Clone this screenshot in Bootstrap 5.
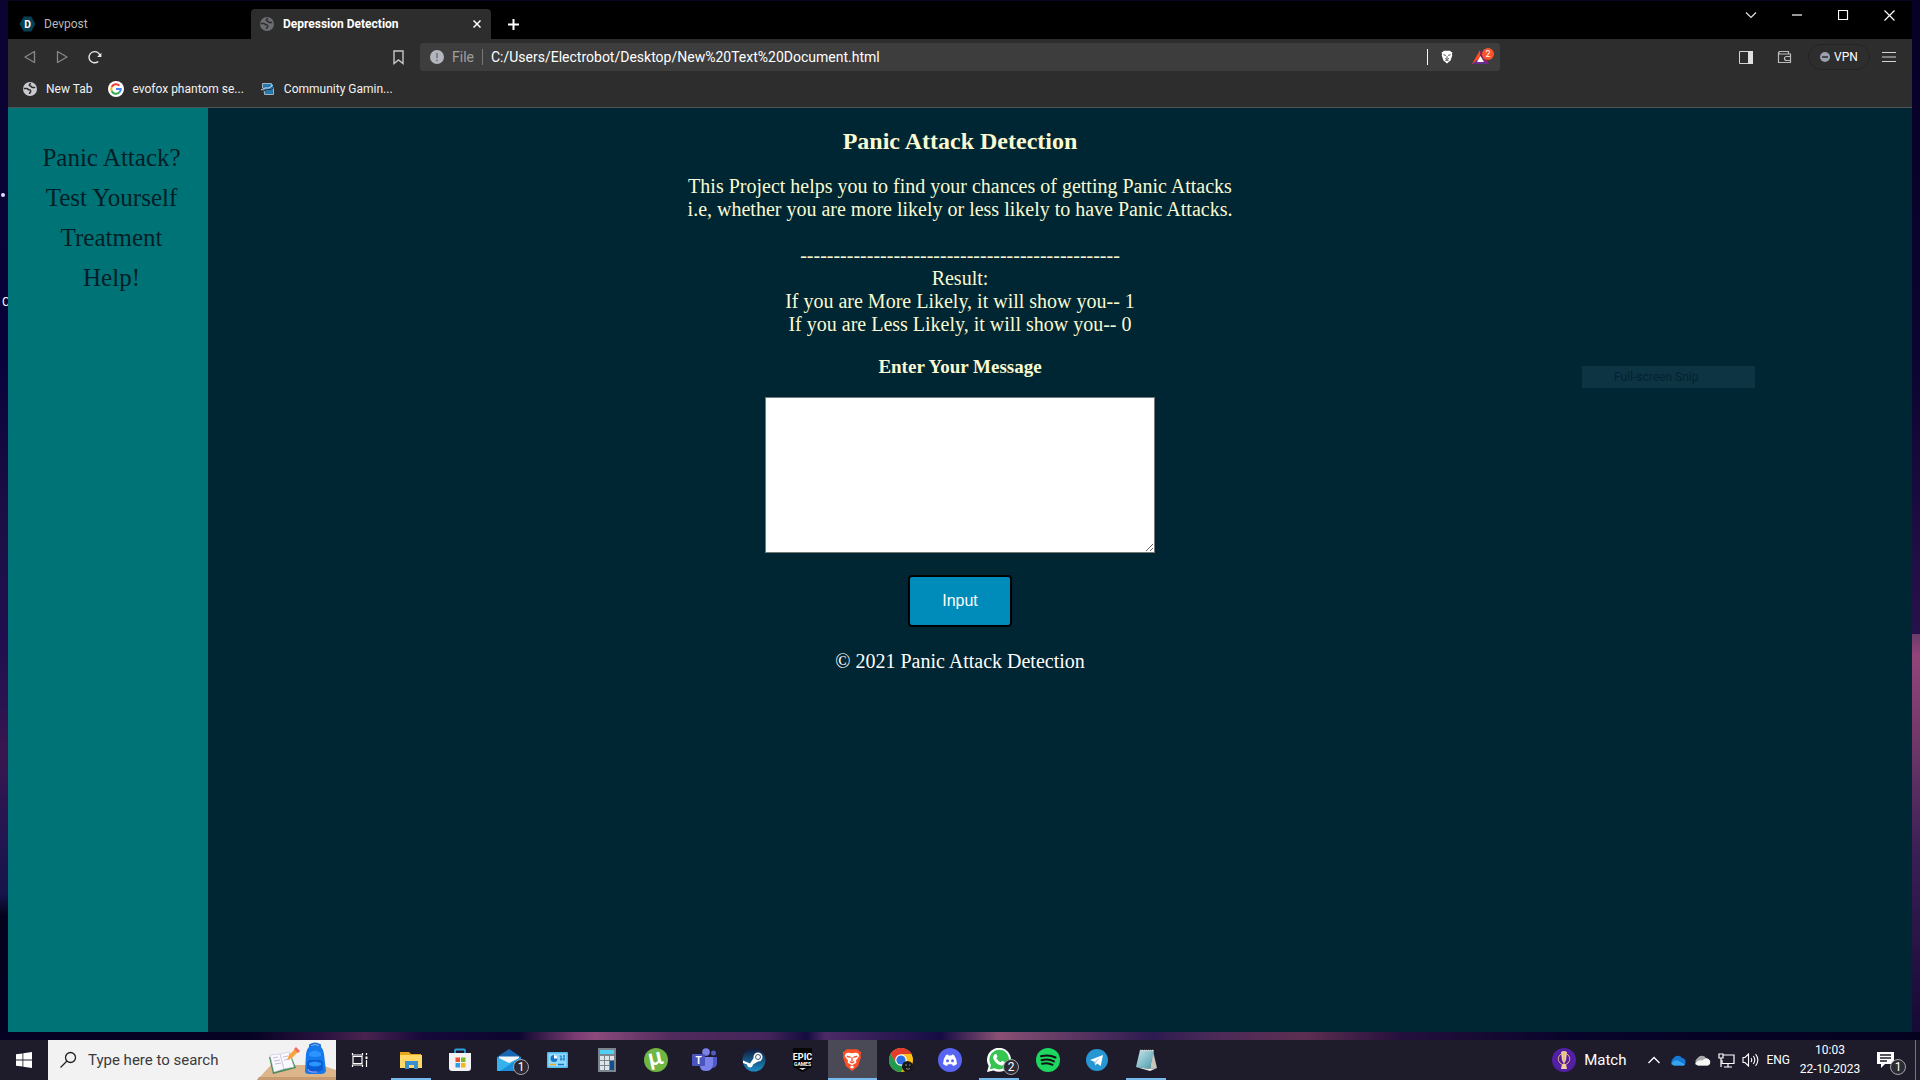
<!DOCTYPE html>
<html lang="en">
<head>
<meta charset="utf-8">
<meta name="viewport" content="width=device-width, initial-scale=1">
<title>Depression Detection</title>
<link href="https://cdn.jsdelivr.net/npm/bootstrap@5.3.0/dist/css/bootstrap.min.css" rel="stylesheet">
<style>
  body { font-family: Roboto, "Open Sans", sans-serif; font-size: 12px; line-height: 16px; color: #fff; background: #0a0322; }
  button { color: inherit; }
  svg { display: block; flex: none; }
  .plain { background: none; border: 0; padding: 0; color: inherit; display: flex; align-items: center; justify-content: center; }

  /* desktop behind the browser window */
  .desktop { padding: 1px 8px 8px; position: relative;
    background:
      linear-gradient(90deg, #060223 0 13%, #2c1340 17%, #4a2350 19%, #15083a 22%, #0d062f 27%, #7a3c72 30%, #8c4a7c 31%, #512a5c 35%, #43245a 40%, #130b3e 42%, #4c2a66 43%, #150c44 49%, #8a5074 52%, #2c1a50 60%, #4a2958 63%, #5d2e51 68%, #240f3c 73%, #1a0b35 76%, #08032a 82%, #04021f) bottom/100% 8px no-repeat,
      linear-gradient(#0b0330, #08023a 34%, #1c0f45 50%, #200f4e 61%, #2a1450 68%, #3a1650 72%, #241650 80%, #16154a 86%, #04021d 88%, #050220) left/8px 100% no-repeat,
      linear-gradient(#070027, #0a0430 34%, #251048 58%, #26124c 61%, #6d3a6c 61%, #93447a 63%, #6d3668 72%, #3a1f55 82%, #140834 100%) right/8px 100% no-repeat; }
  .star { position: absolute; left: 1px; top: 193px; width: 4px; height: 4px; border-radius: 50%; background: #e6dcff; }
  .desk-label { position: absolute; left: 2px; top: 294px; width: 6px; overflow: hidden; }

  /* browser chrome */
  .chrome { background: #2d2d2d; border-bottom: 1px solid #4d5558; }
  .tab-strip { background: #000; height: 38px; }
  .tab-item { height: 30px; width: 240px; padding: 0 6px 0 9px; color: #b8b8b8; gap: 9px; }
  .tab-item.first-tab { width: 239px; padding-left: 11px; gap: 8px; }
  .tab-item.current { background: #2d2d2d; color: #fff; font-weight: 700; border-radius: 4px 4px 0 0; }
  .win-btn { width: 46px; height: 28px; }
  .tool-row { height: 36px; }
  .tool-side { width: 412px; }
  .omnibox { background: #3d3d3d; height: 28px; border-radius: 3px; padding: 0 4px 0 10px; font-size: 14px; }
  .omnibox input { background: none; border: 0; outline: 0; color: #fff; padding: 0; min-width: 0; }
  .vsep { width: 1px; height: 16px; background: #777; }
  .vpn { width: 62px; height: 26px; border: 1px solid #242424; border-radius: 13px; gap: 4px; }
  .marks { height: 32px; padding: 2px 14px; gap: 16px; }
  .marks a { color: #f2f2f2; text-decoration: none; gap: 8px; }

  /* the page itself */
  .site { background: #002633; font-family: "Liberation Serif", serif; font-size: 20px; line-height: 23px; color: #fafad2; }
  .side-menu { width: 200px; background: #007377; padding: 30px 8px 0 15px; }
  .side-menu a { color: #021e26; text-decoration: none; font-size: 25px; line-height: 40px; text-align: center; }
  .site-main { padding: 20px 200px 20px 0; }
  .site h1 { font-size: 24px; line-height: 27px; font-weight: 700; margin: 0 0 20px; }
  .site p { margin: 0 0 20px; }
  .msg-label { font-size: 19px; line-height: 21px; font-weight: 700; margin-bottom: 20px; }
  .msg-box { width: 390px; height: 156px; border: 1px solid #767676; background: #fff; border-radius: 0; display: block; margin-bottom: 22px; padding: 2px; }
  .send { width: 104px; height: 52px; padding: 0 0 2px; background: #008cba; border: 2px solid #000; border-radius: 4px; color: #fff; font-family: "Liberation Sans", sans-serif; font-size: 16px; margin-bottom: 23px; }
  .snip { position: absolute; left: 1582px; top: 366px; width: 173px; height: 22px; padding: 3px 0 0 32px; background: #0c3442; color: #04222f; }

  /* taskbar */
  .taskbar { height: 40px; background: #1e1c2b; }
  .start { width: 48px; height: 40px; }
  .find { width: 288px; height: 40px; background: #f2f2f2; padding-left: 11px; gap: 8px; }
  .find input { background: none; border: 0; outline: 0; padding: 0; margin-left: 3px; font-size: 15px; color: #333; min-width: 0; }
  .find input::placeholder { color: #3a3a3a; opacity: 1; }
  .app { width: 49px; height: 40px; position: relative; padding-right: 2px; }
  .app.wide { width: 51px; padding-right: 4px; }
  .app.running::after { content: ""; position: absolute; left: 4px; right: 5px; bottom: 0; height: 2px; background: #76b9ed; }
  .app.focus { background: #4a4956; }
  .app.focus::after { left: 0; right: 0; }
  .count { position: absolute; left: 28px; top: 19px; width: 16px; height: 16px; border-radius: 50%; border: 1px solid #a5a5a8; background: #2c2b35; font-size: 12px; line-height: 14px; text-align: center; }
  .tray-ico { width: 24px; height: 40px; }
  .news { font-size: 15px; margin-right: 12px; }
  .clock { width: 72px; padding-left: 8px; text-align: center; line-height: 19px; white-space: nowrap; }
</style>
<script src="https://cdn.jsdelivr.net/npm/bootstrap@5.3.0/dist/js/bootstrap.bundle.min.js"></script>
</head>
<body class="d-flex flex-column min-vh-100">

<svg width="0" height="0" class="position-absolute" aria-hidden="true">
  <symbol id="globe" viewBox="0 0 14 14"><circle cx="7" cy="7" r="7" fill="currentColor"/><path d="M.8 6.500h3c1 0 1.200 1.300 2.300 1.300 1.300 0 1.900.8 1.500 2-.3.900-1.100.9-1.100 2.200" fill="none" stroke="#2d2d2d" stroke-width="1.500"/><path d="M8 1.500c-2 .6-2.300 2.300-.6 2.500 1.200.1.900 1.500 2.200 1.500h2.600" fill="none" stroke="#2d2d2d" stroke-width="1.500"/></symbol>
  <symbol id="lion" viewBox="0 0 16 18"><path d="M4 1h8l1.500 1.500L15 3l-.6 2.200.4 1.600-2.200 6.700L8 17.500l-4.600-4L1.200 6.800l.4-1.600L1 3l1.500-.5z"/></symbol>
</svg>

<div class="desktop flex-grow-1 d-flex flex-column">
  <span class="star"></span><span class="desk-label">C</span>

  <header class="chrome">
    <div class="tab-strip d-flex align-items-end">
      <div class="tab-item first-tab d-flex align-items-center me-1">
        <svg width="17" height="16" viewBox="0 0 18 16"><path d="M5 0h8l4.500 8L13 16H5L.5 8z" fill="#073f53"/><text x="9" y="12" text-anchor="middle" font-size="11" font-weight="700" fill="#fff">D</text></svg>
        <span>Devpost</span>
      </div>
      <div class="tab-item current d-flex align-items-center">
        <svg width="14" height="14" color="#6b6d72"><use href="#globe"/></svg>
        <span class="flex-grow-1">Depression Detection</span>
        <button class="plain p-1" aria-label="Close tab"><svg width="8" height="8" viewBox="0 0 8 8"><path d="M.5.5l7 7M7.500.5l-7 7" stroke="#fff" stroke-width="1.500"/></svg></button>
      </div>
      <button class="plain ms-3 mb-2" aria-label="New tab"><svg width="13" height="13" viewBox="0 0 13 13"><path d="M6.500 1v11M1 6.500h11" stroke="#fff" stroke-width="2"/></svg></button>
      <div class="d-flex ms-auto align-self-start">
        <button class="plain win-btn" aria-label="Search tabs"><svg width="12" height="8" viewBox="0 0 12 8"><path d="M1 1.500l5 5 5-5" fill="none" stroke="#e4e4e4" stroke-width="1.200"/></svg></button>
        <button class="plain win-btn" aria-label="Minimize"><svg width="10" height="2"><path d="M0 1h10" stroke="#fff" stroke-width="1.200"/></svg></button>
        <button class="plain win-btn" aria-label="Maximize"><svg width="11" height="11"><path d="M.5.5h9v9h-9z" fill="none" stroke="#fff" stroke-width="1.200"/></svg></button>
        <button class="plain win-btn" aria-label="Close"><svg width="11" height="11"><path d="M.5.5l10 10M10.500.5l-10 10" stroke="#fff" stroke-width="1.200"/></svg></button>
      </div>
    </div>

    <div class="tool-row d-flex align-items-center">
      <div class="tool-side d-flex align-items-center">
        <button class="plain ms-3" aria-label="Back"><svg width="12" height="14" viewBox="0 0 12 14"><path d="M10.500 1.500v11L1 7z" fill="none" stroke="#86888a" stroke-width="1.300" stroke-linejoin="round"/></svg></button>
        <button class="plain ms-3 ps-1" aria-label="Forward"><svg width="12" height="14" viewBox="0 0 12 14"><path d="M1.500 1.500v11L11 7z" fill="none" stroke="#86888a" stroke-width="1.300" stroke-linejoin="round"/></svg></button>
        <button class="plain ms-3 ps-1" aria-label="Reload"><svg width="14" height="14" viewBox="0 0 15 15"><path d="M11 12.300A6 6 0 1 1 12.700 5.500" fill="none" stroke="#e8e8e8" stroke-width="1.500"/><path d="M14.300 3v4.600H9.800z" fill="#e8e8e8"/></svg></button>
        <button class="plain ms-auto me-3" aria-label="Bookmark this page"><svg width="11" height="15" viewBox="0 0 11 15"><path d="M1 1h9v12.500L5.500 10 1 13.500z" fill="none" stroke="#c4c6c8" stroke-width="1.400"/></svg></button>
      </div>
      <div class="omnibox flex-grow-1 d-flex align-items-center">
        <svg width="14" height="14"><circle cx="7" cy="7" r="7" fill="#b4b6bd"/><path d="M7 3v5M7 9.500v1.800" stroke="#77797f" stroke-width="1.700"/></svg>
        <label for="url" class="ms-2 me-2 text-white-50">File</label><span class="vsep me-2"></span>
        <input id="url" class="flex-grow-1" type="text" value="C:/Users/Electrobot/Desktop/New%20Text%20Document.html">
        <span class="vsep bg-light me-2"></span>
        <button class="plain ms-1" aria-label="Shields"><svg width="14" height="14" viewBox="0 0 16 18"><g fill="#fff"><use href="#lion" width="16" height="18"/></g><path d="M3.500 6l3 1M12.500 6l-3 1M5.500 11l2.500 1 2.500-1M8 8v3M6 14l2-1 2 1" fill="none" stroke="#444" stroke-width="1.200"/></svg></button>
        <button class="plain ms-3" aria-label="Rewards, 2 new"><svg width="26" height="20" viewBox="0 0 26 20"><path d="M10 3L2 17h8z" fill="#ff4a24"/><path d="M2 17h17l-4-4H7z" fill="#662d91"/><path d="M10 3l9 14-5-3-4-7z" fill="#9e1f63"/><path d="M10.500 9l3.500 6H7z" fill="#fff"/><circle cx="18" cy="7" r="6" fill="#fb542b"/><text x="18" y="10" font-size="9" text-anchor="middle" fill="#fff">2</text></svg></button>
      </div>
      <div class="tool-side d-flex align-items-center justify-content-end">
        <button class="plain" aria-label="Side panel"><svg width="14" height="13"><path d="M.5.5h13v12H.5z" fill="none" stroke="#d4d4d4"/><path d="M9 0h5v13H9z" fill="#e0e0e0"/></svg></button>
        <button class="plain ms-4" aria-label="Wallet"><svg width="15" height="14" viewBox="0 0 15 14"><path d="M11.500 3.500v-2h-9a1.500 1.500 0 0 0 0 2.500h11v8.500h-12V2M14 6.500H9.500a1.500 1.500 0 0 0 0 4H14" fill="none" stroke="#b9bbbd" stroke-width="1.200"/></svg></button>
        <button class="plain vpn ms-3 me-2"><svg width="10" height="10"><circle cx="5" cy="5" r="5" fill="#9a9fae"/><path d="M2 5h6" stroke="#2d2d2d" stroke-width="1.500"/></svg><span>VPN</span></button>
        <button class="plain ms-1 me-3" aria-label="Menu"><svg width="14" height="12"><path d="M0 1.500h14M0 6h14M0 10.500h14" stroke="#d4d4d4" stroke-width="1.200"/></svg></button>
      </div>
    </div>

    <nav class="marks d-flex align-items-start" aria-label="Bookmarks">
      <a href="#" class="d-flex align-items-center pt-1"><svg width="16" height="16" color="#c9cbcf" viewBox="0 0 16 16"><use href="#globe" x="1" y="1" width="14" height="14"/></svg>New Tab</a>
      <a href="#" class="d-flex align-items-center pt-1"><svg width="16" height="16" viewBox="0 0 16 16"><circle cx="8" cy="8" r="8" fill="#fff"/><g fill="none" stroke-width="2"><path d="M11.500 4.600A4.800 4.800 0 0 0 3.700 6" stroke="#ea4335"/><path d="M3.700 6a4.800 4.800 0 0 0 0 4" stroke="#fbbc05"/><path d="M3.700 10a4.800 4.800 0 0 0 7.500 1.600" stroke="#34a853"/><path d="M11.200 11.600A4.800 4.800 0 0 0 12.800 8H8" stroke="#4285f4"/></g></svg>evofox phantom se...</a>
      <a href="#" class="d-flex align-items-center pt-1"><svg width="16" height="16" viewBox="0 0 16 16"><path d="M3 3h9l1 1v8l-2 2H5l-2-3z" fill="#2878ad"/><path d="M2.500 7V2.500h9V5M4.500 10v3.500h9V6" fill="none" stroke="#9fb4c2"/><path d="M1 9l4-2h4l4-3" fill="none" stroke="#d5dde2"/><path d="M3 10.500l4-2 4 0 3-2" fill="none" stroke="#263844"/></svg>Community Gamin...</a>
    </nav>
  </header>

  <div class="site flex-grow-1 d-flex">
    <nav class="side-menu d-flex flex-column flex-shrink-0">
      <a href="#">Panic Attack?</a>
      <a href="#">Test Yourself</a>
      <a href="#">Treatment</a>
      <a href="#">Help!</a>
    </nav>
    <main class="site-main flex-grow-1 text-center">
      <h1>Panic Attack Detection</h1>
      <p>This Project helps you to find your chances of getting Panic Attacks<br>i.e, whether you are more likely or less likely to have Panic Attacks.<br><br>------------------------------------------------<br>Result:<br>If you are More Likely, it will show you-- 1<br>If you are Less Likely, it will show you-- 0</p>
      <form class="d-flex flex-column align-items-center">
        <label for="msg" class="msg-label">Enter Your Message</label>
        <textarea id="msg" class="msg-box"></textarea>
        <button type="button" class="send">Input</button>
      </form>
      <footer class="text-white">© 2021 Panic Attack Detection</footer>
    </main>
  </div>
  <div class="snip">Full-screen Snip</div>
</div>

<footer class="taskbar d-flex align-items-center">
  <button class="plain start" aria-label="Start"><svg width="16" height="16" viewBox="0 0 16 16" fill="#fff"><path d="M0 2.300L6.500 1.400v6.200H0zM7.300 1.200L16 0v7.600H7.300zM0 8.400h6.500v6.200L0 13.700zM7.300 8.400H16V16l-8.700-1.200z"/></svg></button>
  <div class="find d-flex align-items-center">
    <label for="find" aria-label="Search"><svg width="18" height="18" viewBox="0 0 18 18"><circle cx="11.500" cy="6.500" r="5" fill="none" stroke="#222" stroke-width="1.300"/><path d="M8 10l-6.500 6.500" stroke="#222" stroke-width="1.300"/></svg></label>
    <input id="find" type="text" class="flex-grow-1" placeholder="Type here to search">
    <svg width="79" height="40" viewBox="0 0 79 40"><path d="M0 40l14-15h50l15 5v10z" fill="#dcb58b"/><path d="M0 40l2-3h77v3z" fill="#c79b70"/><path d="M12 17l21-4 6 15-23 6z" fill="#3f8a55"/><path d="M13 15l10-1 4 15-10 3zM23 14l9-2 5 15-10 2z" fill="#fbf9ff" stroke="#c8c1d8" stroke-width=".6"/><path d="M16 18l5-1M17 21l6-1M18 24l6-1M26 17l5-1M27 20l6-1" stroke="#c3bcd6"/><path d="M30 20l2-5 7-7 3 3-7 7z" fill="#f8a33c"/><path d="M37 9l2-2 4 4-2 2z" fill="#ef6b63"/><path d="M53 8V5q5-3 10 0v3" fill="none" stroke="#1b6fd1" stroke-width="2"/><path d="M49 14q1-9 9-9t9 9l2 17q-1 3-5 3H52q-4 0-4-3z" fill="#1479ed"/><path d="M52 13q6-5 12 0v3q-6 2-12 0z" fill="#2b94ff"/><path d="M50 24q0-4 4-4h8q4 0 4 4v6q-8 4-16 0z" fill="#0a5cd2"/><path d="M52 23q6-3 12 0v2q-6 3-12 0z" fill="#2b94ff"/><path d="M51 29q0 3 4 3h5" fill="none" stroke="#b99cff"/></svg>
  </div>
  <button class="plain app wide" aria-label="Task view"><svg width="18" height="18" viewBox="0 0 18 18"><g fill="none" stroke="#fff" stroke-width="1.200"><path d="M2 5.500h9v7H2zM1.500 2v2h10V2M1.500 16v-2h10v2M15.500 2v2M15.500 9v7"/></g><path d="M14.500 5.500h2v2.500h-2z" fill="#fff"/></svg></button>
  <button class="plain app running" aria-label="File Explorer"><svg width="22" height="18" viewBox="0 0 22 18"><path d="M0 1h9l2 2h10v14H0z" fill="#e8a61c"/><path d="M0 4h22v13H0z" fill="#ffd868"/><path d="M5 10h13v8h-4v-4H9v4H5z" fill="#3a8fd3"/></svg></button>
  <button class="plain app" aria-label="Microsoft Store"><svg width="24" height="24" viewBox="0 0 24 24"><path d="M7 6V2.500q0-1 1-1h8q1 0 1 1V6" fill="none" stroke="#2ca1df" stroke-width="1.800"/><path d="M1 5h22v15q0 3-3 3H4q-3 0-3-3z" fill="#f3f3f5"/><path d="M7.500 9.500H12V14H7.500z" fill="#e8532d"/><path d="M13 9.500h4.500V14H13z" fill="#7db928"/><path d="M7.500 15H12v4.500H7.500z" fill="#2c9fe0"/><path d="M13 15h4.500v4.500H13z" fill="#f5b51c"/></svg></button>
  <button class="plain app" aria-label="Mail, 1 new"><svg width="24" height="24" viewBox="0 0 24 24"><path d="M0 9l12-8 12 8v4H0z" fill="#1668b5"/><path d="M2 8.500h20v6L12 18 2 13z" fill="#f1f7fc"/><path d="M0 9l12 6 12-6v14H0z" fill="#35b1ee"/><path d="M24 9v14H3z" fill="#1b8fdd"/></svg><span class="count">1</span></button>
  <button class="plain app" aria-label="Control panel"><svg width="21" height="16" viewBox="0 0 21 16"><rect width="21" height="16" rx="1" fill="#53b8ee"/><path d="M1.500 1.500h18v13h-18z" fill="#8fdbff"/><circle cx="7" cy="6.500" r="3.500" fill="#1b76c2"/><path d="M7 6.500V3a3.500 3.500 0 0 1 3.500 3.500z" fill="#fff"/><path d="M12.500 4h2M16 4h2M13 7h5M14 4v5M17 3v6" stroke="#1b76c2"/><path d="M3 12.500h6" stroke="#f4a623" stroke-width="1.500"/><path d="M11 12.500h6" stroke="#1b76c2" stroke-width="1.500"/></svg></button>
  <button class="plain app" aria-label="Calculator"><svg width="18" height="24" viewBox="0 0 18 24"><path d="M0 0h18v24H0z" fill="#7b858e"/><path d="M2 2h14v4H2z" fill="#50d0f2"/><g fill="#dfe4e8"><path d="M2 8h4v4H2zM7 8h4v4H7zM12 8h4v4h-4zM2 13h4v4H2zM7 13h4v4H7zM2 18h4v4H2zM7 18h4v4H7z"/></g><path d="M12 13h4v9h-4z" fill="#12508d"/></svg></button>
  <button class="plain app" aria-label="uTorrent"><svg width="24" height="24" viewBox="0 0 24 24" overflow="visible"><circle cx="12" cy="12" r="12" fill="#6fb643"/><text x="12" y="17" font-family="Lato" font-size="24" font-weight="700" text-anchor="middle" fill="#fff" transform="rotate(-12 12 12)">µ</text></svg></button>
  <button class="plain app" aria-label="Teams"><svg width="25" height="24" viewBox="0 0 25 24"><circle cx="14" cy="4" r="3.800" fill="#7b83eb"/><circle cx="21.500" cy="5" r="2.500" fill="#5059c9"/><path d="M16 9h9v7q-1 4-5 4z" fill="#5059c9"/><path d="M8 9h13v8q-1 6-7 6t-6-5z" fill="#7b83eb"/><rect y="6" width="13" height="12" rx="1" fill="#4b53bc"/><text x="6.500" y="16" font-size="10" font-weight="700" text-anchor="middle" fill="#fff">T</text></svg></button>
  <button class="plain app" aria-label="Steam"><svg width="24" height="24" viewBox="0 0 24 24"><defs><linearGradient id="st" x2="0" y2="1"><stop stop-color="#101a3c"/><stop offset="1" stop-color="#1e8fc7"/></linearGradient></defs><circle cx="12" cy="12" r="11.500" fill="url(#st)"/><circle cx="16" cy="9" r="4.500" fill="#fff"/><circle cx="16" cy="9" r="2.500" fill="#fff" stroke="#18335f" stroke-width=".8"/><path d="M1 12.500l7 3 4-6 4 4-5 3q-.5 3-3 3-2.500 0-3-3l-4-1.500z" fill="#fff"/></svg></button>
  <button class="plain app" aria-label="Epic Games"><svg width="21" height="24" viewBox="0 0 21 24"><path d="M1 0h19v19l-9.500 5L1 19z" fill="#060606"/><text x="10.500" y="12" font-size="9" font-weight="700" text-anchor="middle" fill="#fff">EPIC</text><text x="10.500" y="18" font-size="5" font-weight="700" text-anchor="middle" fill="#fff">GAMES</text><path d="M7 20h7l-3.500 2z" fill="#ddd"/></svg></button>
  <button class="plain app running focus" aria-label="Brave"><svg width="22" height="24" viewBox="0 0 16 18"><g fill="#fb4f27"><use href="#lion" width="16" height="18"/></g><path d="M3.500 4l2-.5 2.500.5 2.500-.5 2 .5 1 2-2.500 3.300.3 1.700L8 13l-3.300-2 .3-1.700L2.500 6z" fill="#fff"/><path d="M4 6.200l3 .8M12 6.200L9 7M8 7v3M6.300 10.300L8 11l1.700-.7" stroke="#fb4f27" fill="none"/><path d="M8 13.200l1.800 1L8 15.500l-1.800-1.300z" fill="#fff"/></svg></button>
  <button class="plain app" aria-label="Chrome"><svg width="24" height="24" viewBox="0 0 24 24"><circle cx="12" cy="12" r="12" fill="#fbc116"/><path d="M12 6h10.400A12 12 0 0 0 1.600 6L7 15z" fill="#e33b2e"/><path d="M1.600 6a12 12 0 0 0 10.400 18l5.200-9-10 .300z" fill="#219b4d"/><circle cx="12" cy="12" r="5.800" fill="#fff"/><circle cx="12" cy="12" r="4.600" fill="#2c6fe2"/><circle cx="18.500" cy="18.500" r="5.500" fill="#181818"/><path d="M16 17h2M20 17h1.500M17 20.500q2 1.500 4 0" stroke="#aaa" fill="none" stroke-width=".8"/></svg></button>
  <button class="plain app" aria-label="Discord"><svg width="24" height="24" viewBox="0 0 24 24"><circle cx="12" cy="12" r="12" fill="#5865f2"/><path d="M8 7l2-.5.6 1h2.800l.6-1 2 .5q3 4 3 9-2 1.500-4 2l-1-1.700h-4L9 18q-2-.5-4-2 0-5 3-9z" fill="#fff"/><circle cx="9.500" cy="12.800" r="1.500" fill="#5865f2"/><circle cx="14.500" cy="12.800" r="1.500" fill="#5865f2"/></svg></button>
  <button class="plain app running" aria-label="WhatsApp, 2 new"><svg width="24" height="24" viewBox="0 0 24 24"><path d="M0 24l1.700-6A12 12 0 1 1 6.500 22.500z" fill="#fff"/><path d="M2.800 21.200L4 17a9.800 9.800 0 1 1 3.500 3.200z" fill="#35c550"/><path d="M8 6l1.500.2 1 2.600-1.200 1.500q1.500 2.700 4.400 4l1.500-1.600 2.800 1.300q0 3.500-3.500 3.500-6-1-8.500-7.500Q6 7.500 8 6z" fill="#fff"/></svg><span class="count">2</span></button>
  <button class="plain app" aria-label="Spotify"><svg width="24" height="24" viewBox="0 0 24 24"><circle cx="12" cy="12" r="12" fill="#1ed760"/><path d="M5 8.300q8-2.300 14.500 1.200M5.500 12.200q7-2 12.500 1.200M6 15.800q6-1.700 10.500 1" fill="none" stroke="#121212" stroke-width="2" stroke-linecap="round"/></svg></button>
  <button class="plain app" aria-label="Telegram"><svg width="22" height="22" viewBox="0 0 22 22"><circle cx="11" cy="11" r="11" fill="#2797d4"/><path d="M4 11l13-5-2.300 11-3.500-2.500-2 2-.7-3.800z" fill="#fff"/><path d="M8.500 12.700L14.500 8l-4.300 5.500-.9 3z" fill="#b4d5e8"/></svg></button>
  <button class="plain app running" aria-label="Notepad"><svg width="24" height="24" viewBox="0 0 24 24"><defs><linearGradient id="np" x2="1" y2="1"><stop stop-color="#c4e8ec"/><stop offset="1" stop-color="#4a98a8"/></linearGradient></defs><path d="M19 3l4 17-7 1z" fill="#c9c5ba"/><path d="M6 2h14l-4 19-14-2z" fill="url(#np)"/><path d="M2 19l14 2 7-1-7 3z" fill="#e9eff0"/><path d="M6 2.500h14" stroke="#d5dadb" stroke-width="1.500" stroke-dasharray="1 1"/></svg></button>

  <button class="plain news ms-auto gap-2"><svg width="24" height="24" viewBox="0 0 24 24"><circle cx="12" cy="12" r="12" fill="#5320a5"/><path d="M9 4q3-2 6 0l-1 8q-1 3-2 3t-2-3zM10 16h4l1 5H9z" fill="#efcf9c"/><path d="M9 6q-5 4-1 9l3 2M15 6q5 4 1 9l-3 2M12 4v12" fill="none" stroke="#e7b16e"/></svg><span>Match</span></button>
  <button class="plain tray-ico ms-1" aria-label="Show hidden icons"><svg width="12" height="8"><path d="M.5 7L6 1.500 11.500 7" fill="none" stroke="#fff" stroke-width="1.300"/></svg></button>
  <button class="plain tray-ico" aria-label="OneDrive"><svg width="17" height="11" viewBox="0 0 17 11"><path d="M4 10.500a4 4 0 0 1-.5-7.300A5 5 0 0 1 12 3a4 4 0 0 1 1.500 7.500z" fill="#1478d4"/><path d="M1 9q3-5 7-3.500l7 4-1 1H4z" fill="#35a5ee"/></svg></button>
  <button class="plain tray-ico" aria-label="Cloud storage"><svg width="17" height="11" viewBox="0 0 17 11"><path d="M4 10.500a4 4 0 0 1-.5-7.300A5 5 0 0 1 12 3a4 4 0 0 1 1.500 7.500z" fill="#a9a9ad"/><path d="M1 9q3-5 7-3.500 5-4 8 0 1 4-2 5H4z" fill="#f7f7f7"/></svg></button>
  <button class="plain tray-ico" aria-label="Network"><svg width="17" height="15" viewBox="0 0 17 15"><path d="M5 2h11v8.500H4V7M10 10.500V14M6 14h8" fill="none" stroke="#fff" stroke-width="1.200"/><path d="M1 1h4v4H1zM3 5v9" fill="none" stroke="#fff" stroke-width="1.200"/></svg></button>
  <button class="plain tray-ico" aria-label="Volume"><svg width="17" height="14" viewBox="0 0 17 14"><path d="M1 4.500h2L6.500 1v12L3 9.500H1zM9 5q1.500 2 0 4M11.300 3q3 4 0 8M13.600 1.200q4.500 5.800 0 11.600" fill="none" stroke="#fff" stroke-width="1.100"/></svg></button>
  <button class="plain ms-1">ENG</button>
  <div class="clock"><div>10:03</div><div>22-10-2023</div></div>
  <button class="plain app me-1" aria-label="Notifications, 1 new"><svg width="17" height="16" viewBox="0 0 17 16"><path d="M0 0h17v12H8l-4 4v-4H0z" fill="#fff"/><path d="M3 3h11M3 6h11M3 9h7" stroke="#1e1c2b" stroke-width="1.300"/></svg><span class="count">1</span></button>
  <span class="vsep align-self-stretch h-100 me-1"></span>
</footer>
</body>
</html>
